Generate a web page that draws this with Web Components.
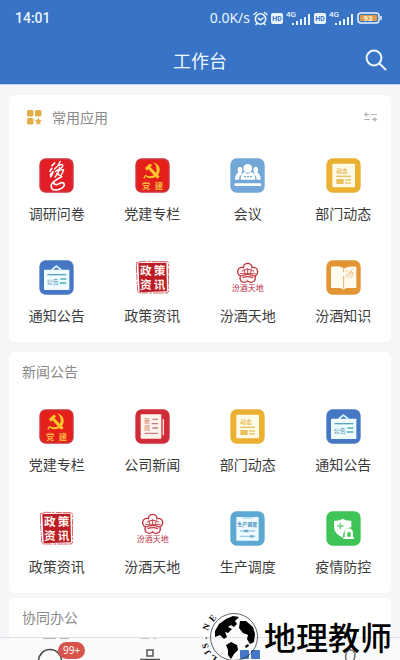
<!DOCTYPE html>
<html lang="zh-CN">
<head>
<meta charset="utf-8">
<meta name="viewport" content="width=device-width, initial-scale=1">
<title>工作台</title>
<style>
html, body { margin: 0; height: 100%; }
body { overflow: hidden; font-family: "Noto Sans CJK SC", "Noto Sans", sans-serif; color: #3c3c3c; background: #f5f6f8; }
</style>
</head>
<body>
<work-bench></work-bench>
<script>
const define = (name, html) => customElements.define(name, class extends HTMLElement {
  constructor() {
    super();
    this.attachShadow({ mode: 'open' });
  }
  connectedCallback() {
    this.shadowRoot.innerHTML = typeof html === 'function' ? html(this) : html;
  }
});

const tile = (fill, edge = fill) => `<rect x="1" y="1" width="103" height="103" rx="19" fill="${edge}"/><rect x="6" y="6" width="93" height="93" rx="14" fill="${fill}"/>`;

const petals = (r, fill) => [[53, 23], [70, 35], [63, 54], [43, 54], [36, 35]].map(([x, y]) => `<circle cx="${x}" cy="${y}" r="${r}" fill="${fill}"/>`).join('');

const ICONS = {
  survey: tile('#e31d25', '#d2303a') + `
    <g fill="none" stroke="#fff" stroke-linecap="round" stroke-linejoin="round">
      <path stroke-width="5" d="M47 15l-8 8M38 31l-5 9M34 50q5-5 8-9q-1 9-7 15"/>
      <path stroke-width="4" d="M64 10Q60 22 46 34M60 22q14-6 11 3q-4 8-18 12M49 40q12-5 25-5q-3 9-9 19M61 28q1 16-13 29M53 46l9 6"/>
      <path stroke-width="5" d="M68 56Q42 69 37 80Q34 96 50 96Q72 94 76 81Q75 69 60 77Q50 84 44 75"/>
    </g>`,
  party: tile('#e5201a', '#cf3039') + `
    <path d="M54 13Q76 19 74 39Q70 61 46 61Q37 61 32 55L28 63L25 59L31 50Q44 59 56 52Q68 43 64 28Q62 19 54 13Z" fill="#fcc72c"/>
    <path d="M30 30L44 17L52 21L46 27L74 56L67 62L40 34L35 38Z" fill="#fcc72c"/>
    <text x="21" y="93" font-size="25" font-weight="700" fill="#f5b440">党</text><text x="59" y="93" font-size="25" font-weight="700" fill="#f5b440">建</text>`,
  meeting: tile('#73a7d7') + `
    <g fill="#fff"><ellipse cx="30" cy="36" rx="7" ry="10"/><ellipse cx="77" cy="36" rx="7" ry="10"/>
      <path d="M15 65Q15 45 29 43L36 47Q27 55 27 65ZM92 65Q92 45 78 43L71 47Q80 55 80 65Z"/>
      <circle cx="53" cy="31" r="13"/><path d="M32 65Q32 45 44 42L53 48L63 42Q76 45 76 65Z"/><rect x="13" y="76" width="81" height="8" rx="4"/></g>
    <path d="M42 56h6m3 0h6m3 0h6" stroke="#73a7d7" stroke-width="4"/>`,
  trends: tile('#e9b031') + `
    <rect x="19" y="17" width="68" height="71" rx="2" fill="#fffae6"/>
    <text x="31" y="44" font-size="17" font-weight="500" fill="#e5b03c">动态</text>
    <g fill="#e9c05e"><rect x="31" y="53" width="44" height="4"/><rect x="31" y="63" width="22" height="15"/><rect x="57" y="64" width="18" height="4"/><rect x="57" y="73" width="18" height="4"/></g>`,
  notice: tile('#4677c5') + `
    <path d="M38 30L52 18L67 30" fill="none" stroke="#d9f2fb" stroke-width="5"/>
    <rect x="15" y="29" width="76" height="61" rx="2" fill="#effcff"/>
    <path d="M25 44H82" stroke="#5ba6bc" stroke-width="4"/><text x="23" y="71" font-size="18" font-weight="500" fill="#5e94bd">公告</text>
    <path d="M64 57H82M62 69H82" stroke="#4eafbb" stroke-width="5"/>`,
  policy: `
    <path d="M10 9L94 8L96 94L14 97Z" fill="#bd1e26"/>
    <path d="M4 8L20 4L94 5L101 8L100 96L96 99L14 99L8 94L5 40Z" fill="none" stroke="#bd1e26" stroke-width="2" stroke-dasharray="32 3 8 4 18 2"/>
    <g font-family="Liberation Sans, Noto Sans CJK SC, sans-serif" font-size="35" font-weight="700" fill="#fff3ee"><text x="15" y="46">政</text><text x="56" y="46">策</text><text x="15" y="88">资</text><text x="56" y="88">讯</text></g>`,
  blossom: petals(15, '#bf3039') + petals(11, '#fff5f4') + `
    <circle cx="53" cy="40" r="15" fill="#fff5f4"/>
    <path d="M35 34Q53 22 72 34M30 41H77M42 28l3 13M53 24v17M64 28l-3 13" fill="none" stroke="#c94a53" stroke-width="3"/>
    <path d="M34 48Q53 38 73 48M38 53Q53 47 69 53" fill="none" stroke="#c53d46" stroke-width="4"/>
    <text x="5" y="94" font-size="24" fill="#b72e42">汾酒天地</text>`,
  knowledge: tile('#e39535') + `
    <path d="M15 20Q37 17 50 23Q57 27 64 21Q73 18 91 20V84H65Q57 84 53 89Q49 84 40 84H15Z" fill="#fffbef"/>
    <path d="M53 26V37M53 47V85" stroke="#e8ad65" stroke-width="3"/><path d="M64 30l-4 7M65 44l-6 8M80 26q-4 9-11 12M68 38h13q-2 13-8 17M76 34q-2 13-11 20M60 45l9-4" fill="none" stroke="#eec496" stroke-width="3"/>`,
  news: tile('#cd2c38') + `
    <rect x="17" y="16" width="62" height="73" rx="3" fill="#fff3ed"/><path d="M85 30V79" stroke="#ffe4df" stroke-width="4"/>
    <g font-family="Liberation Sans, Noto Sans CJK SC, sans-serif" font-size="17" font-weight="500" fill="#d28567"><text x="28" y="41">新</text><text x="28" y="62">闻</text></g>
    <path d="M52 31H69M50 44H69M52 57H69M29 73H69" stroke="#c87e74" stroke-width="4"/>`,
  dispatch: tile('#5ca8d3') + `
    <rect x="19" y="18" width="67" height="71" rx="2" fill="#eefaff"/><path d="M37 21H68" stroke="#8fcbe7" stroke-width="3"/>
    <text x="22" y="46" font-size="15" font-weight="700" fill="#3f89b9">生产调度</text>
    <path d="M30 60H76M30 76H76" stroke="#9fcde2" stroke-width="4"/><path d="M42 60h13M59 76h12" stroke="#6baed0" stroke-width="7"/>`,
  health: tile('#3fc557') + `
    <path d="M50 23Q61 30 76 29V49Q60 51 53 64L50 80Q24 68 24 48V29Q39 31 50 23Z" fill="#fff"/>
    <path d="M43 36V55M33 45H53" stroke="#75d487" stroke-width="5"/>
    <path d="M56 78V65Q57 52 69 52Q80 53 81 65V78H84V84H52V78Z" fill="#fff"/><path d="M64 77V68Q64 62 69 62Q74 63 74 69V77Z" fill="#3fc557"/>`
};

define('app-icon', el => `
  <style>:host{display:block;width:35px;height:35px}svg{display:block;width:100%;height:100%}</style>
  <svg viewBox="0 0 105 105" aria-hidden="true">${ICONS[el.getAttribute('name')]}</svg>`);

define('app-item', el => `
  <style>
    :host{display:block}
    button{display:flex;flex-direction:column;align-items:center;gap:9px;width:100%;padding:0;border:0;background:none;font:inherit;color:inherit;font-size:14px;line-height:22px;white-space:nowrap}
  </style>
  <button type="button"><app-icon name="${el.getAttribute('icon')}"></app-icon><slot></slot></button>`);

define('app-card', `
  <style>
    :host{display:block;background:#fff;border-radius:6px;padding-bottom:16px}
    header{display:flex;align-items:center;gap:10px;height:var(--head,38px);padding:0 13px;color:#8a8a8a}
    h2{flex:1;margin:0;font-size:14px;font-weight:400;line-height:22px}
    .grid{display:grid;grid-template-columns:repeat(4,1fr);row-gap:36px;padding-top:19px}
  </style>
  <header><slot name="mark"></slot><h2><slot name="title"></slot></h2><slot name="action"></slot></header>
  <div class="grid"><slot></slot></div>`);

define('signal-bars', `
  <style>:host{display:block}svg{display:block}</style>
  <svg width="25" height="16" viewBox="0 0 25 16" fill="#e8f5ff">
    <text x="0" y="7" font-family="Roboto, sans-serif" font-size="8" font-weight="500">4G</text>
    <rect x="6" y="13" width="2" height="2"/><rect x="10" y="11" width="2" height="4"/><rect x="14" y="9" width="2" height="6"/><rect x="18" y="7" width="2" height="8"/><rect x="22" y="4" width="2" height="11"/>
  </svg>`);

define('hd-mark', `
  <style>:host{display:block}svg{display:block}</style>
  <svg width="12" height="11" viewBox="0 0 12 11"><rect width="12" height="11" rx="2" fill="#e8f5ff"/><text x="6" y="8" text-anchor="middle" font-family="Roboto, sans-serif" font-size="7" font-weight="700" fill="#3973c6">HD</text></svg>`);

define('status-bar', `
  <style>
    :host{display:flex;align-items:center;justify-content:space-between;height:36px;padding:0 18px 0 15px;color:#e8f5ff;font-family:"Noto Sans",sans-serif;font-size:14px;line-height:20px}
    .time{font-family:Roboto,sans-serif;font-weight:500}
    .right{display:flex;align-items:center;gap:3px}
    svg{display:block}
  </style>
  <span class="time">14:01</span>
  <div class="right">
    <span>0.0K/s</span>
    <svg width="15" height="15" viewBox="0 0 15 15" fill="none" stroke="#e8f5ff" stroke-width="1.6" stroke-linecap="round"><circle cx="7.500" cy="8" r="5.200"/><path d="M5.500 7.300l2 1.700 2.500-2M1 3.500l2.500-2M14 3.500l-2.500-2M4 12.500l-1 1M11 12.500l1 1"/></svg>
    <hd-mark></hd-mark><signal-bars></signal-bars><hd-mark></hd-mark><signal-bars></signal-bars>
    <svg width="25" height="12" viewBox="0 0 25 12"><rect x="1" y="1" width="21" height="10" rx="3" fill="#3973c6" stroke="#e8f5ff" stroke-width="1.500"/><rect x="3" y="3" width="17" height="6" rx="1" fill="#dc9c4b"/><path d="M24 4v4" stroke="#e8f5ff" stroke-width="1.500"/><text x="11" y="9" text-anchor="middle" font-family="Roboto, sans-serif" font-size="8" font-weight="700" fill="#fff2d8">93</text></svg>
  </div>`);

define('title-bar', `
  <style>
    :host{display:grid;grid-template-columns:1fr auto 1fr;align-items:center;height:48px;padding:0 13px;color:#edf7ff}
    h1{grid-column:2;margin:0;font-size:18px;font-weight:400;line-height:26px}
    button{justify-self:end;padding:0;border:0;background:none;color:inherit}
    svg{display:block}
  </style>
  <h1>工作台</h1>
  <button type="button" aria-label="搜索"><svg width="22" height="22" viewBox="0 0 22 22" fill="none" stroke="currentColor" stroke-width="2" stroke-linecap="round"><circle cx="9" cy="9" r="7.400"/><path d="M14.500 14.500L20.500 20.500"/></svg></button>`);

define('tab-bar', `
  <style>
    :host{display:block;background:#f9fafb;border-top:1px solid #dfe1e4;height:22px}
    nav{display:grid;grid-template-columns:repeat(4,1fr);height:100%;overflow:hidden}
    button{position:relative;padding:0;border:0;background:none;display:flex;justify-content:center;align-items:flex-start;font:inherit}
    svg{display:block}
    .badge{position:absolute;left:calc(50% + 8px);top:4px;padding:0 5px;border-radius:9px;background:#d6544c;color:#fff;font-family:"Noto Sans",sans-serif;font-size:10px;line-height:17px}
  </style>
  <nav>
    <button type="button" aria-label="消息"><svg width="60" height="36" viewBox="0 0 60 36"><path d="M23 0h13M40 0h9" stroke="#777"/><circle cx="30" cy="23" r="11.500" fill="none" stroke="#454545" stroke-width="1.500"/></svg><span class="badge">99+</span></button>
    <button type="button" aria-label="通讯录"><svg width="60" height="36" viewBox="0 0 60 36"><path d="M20 0h9M33 0h4" stroke="#999"/><rect x="27" y="12" width="6" height="6" fill="none" stroke="#555" stroke-width="1.500"/><path d="M20 21.500h20" stroke="#555" stroke-width="1.500"/></svg></button>
    <button type="button" aria-label="工作台"><svg width="60" height="36" viewBox="0 0 60 36" fill="#4677c7"><rect x="20" y="12" width="9" height="9" rx="1"/><rect x="31" y="12" width="9" height="9" rx="1"/></svg></button>
    <button type="button" aria-label="我的"><svg width="60" height="36" viewBox="0 0 60 36"><path d="M27 24Q25 20 26 16Q27 12 30 12Q34 12 35 16Q35 20 33 24" fill="none" stroke="#777" stroke-width="1.600"/></svg></button>
  </nav>`);

define('site-mark', `
  <style>
    :host{display:flex;align-items:center;gap:4px;color:#000;pointer-events:none}
    span{font-size:32px;font-weight:500;line-height:48px;white-space:nowrap}
    svg{display:block}
  </style>
  <svg width="60" height="56" viewBox="0 0 60 56">
    <circle cx="34" cy="29" r="23.500" fill="none" stroke="#222" stroke-width=".7"/>
    <path d="M15 23L19 16L26 11L33 8L39 9L35 13L37 16L34 19L31 17L28 19L32 21L28 25L25 24L27 29L24 31L20 27L15 29Z"/>
    <path d="M26 37L31 34L37 37L38 42L34 46L31 51L28 47L28 42Z"/>
    <path d="M40 13L46 13L53 19L55 26L54 34L50 36L47 31L48 27L43 25L39 20ZM45 38l3-2 1 2-3 2Z"/>
    <g font-family="Liberation Serif, serif" font-size="9" font-weight="700" text-anchor="middle">
      <text transform="translate(15 12) rotate(-50)">E</text><text transform="translate(9 20) rotate(-68)">N</text><text transform="translate(7 30) rotate(-90)">.</text><text transform="translate(8 37) rotate(-105)">S</text><text transform="translate(10 43) rotate(-125)">J</text><text transform="translate(15 48) rotate(-145)">L</text>
    </g>
  </svg>
  <span>地理教师</span>`);

const items = list => list.map(([icon, label]) => `<app-item icon="${icon}">${label}</app-item>`).join('');

define('work-bench', `
  <style>
    :host{display:flex;flex-direction:column;height:100vh;overflow:hidden;position:relative}
    .top{flex:none;background:#3973c6;border-bottom:1px solid #bfd3ed}
    main{flex:1;min-height:0;overflow:hidden;padding:10px 9px 0;display:flex;flex-direction:column}
    app-card{flex:none}
    .first{--head:44px;margin-bottom:10px}
    .second{margin-bottom:5px}
    .mark{margin-left:5px}
    .set{padding:0;border:0;background:none}
    svg{display:block}
    tab-bar{flex:none}
    site-mark{position:absolute;right:8px;bottom:-4px}
  </style>
  <div class="top"><status-bar></status-bar><title-bar></title-bar></div>
  <main>
    <app-card class="first">
      <svg slot="mark" class="mark" width="15" height="15" viewBox="0 0 15 15" fill="#e0ad47"><rect width="6.500" height="6.500" rx="1.500"/><rect x="8" width="6.500" height="6.500" rx="1.500"/><rect y="8" width="6.500" height="6.500" rx="1.500"/><path d="M11.300 7.500l1.200 2.400 2.500.3-1.900 1.800.5 2.700-2.300-1.300L9 14.700l.5-2.700-1.900-1.800 2.500-.3Z"/></svg>
      <span slot="title">常用应用</span>
      <button slot="action" class="set" type="button" aria-label="设置"><svg width="15" height="14" viewBox="0 0 15 14" fill="none" stroke="#b4b4b4" stroke-width="1.200"><path d="M1 4.500h5M8 4.500h6M4 2.500L2 4.500 4 6.500M1 9.500h6M9 9.500h5M11 7.500l2 2-2 2"/></svg></button>
      ${items([['survey','调研问卷'],['party','党建专栏'],['meeting','会议'],['trends','部门动态'],['notice','通知公告'],['policy','政策资讯'],['blossom','汾酒天地'],['knowledge','汾酒知识']])}
    </app-card>
    <app-card class="second">
      <span slot="title">新闻公告</span>
      ${items([['party','党建专栏'],['news','公司新闻'],['trends','部门动态'],['notice','通知公告'],['policy','政策资讯'],['blossom','汾酒天地'],['dispatch','生产调度'],['health','疫情防控']])}
    </app-card>
    <app-card><span slot="title">协同办公</span></app-card>
  </main>
  <tab-bar></tab-bar>
  <site-mark></site-mark>`);
</script>
</body>
</html>
